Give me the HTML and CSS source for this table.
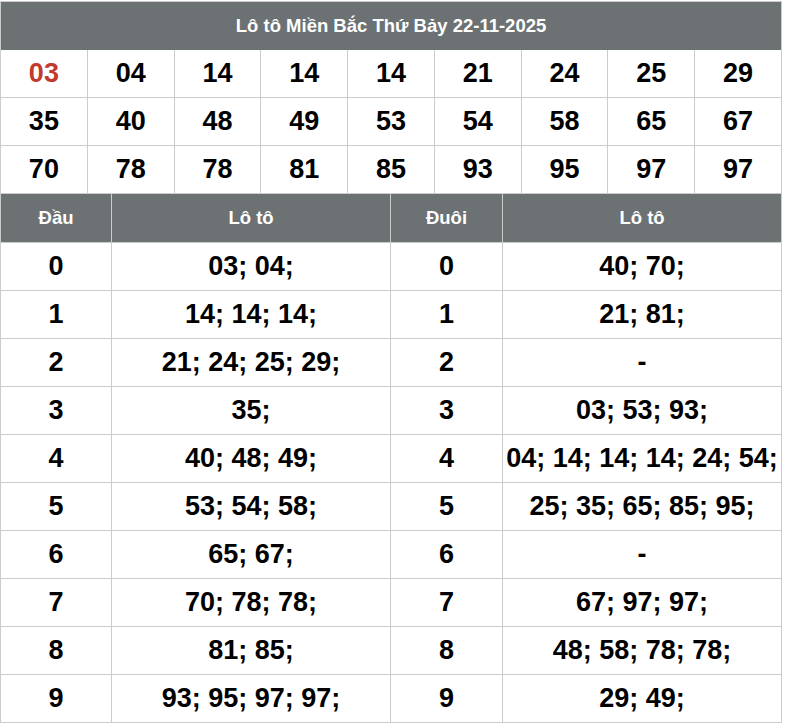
FILE: index.html
```html
<!DOCTYPE html>
<html lang="vi">
<head>
<meta charset="utf-8">
<title>Lô tô Miền Bắc</title>
<link rel="stylesheet" href="styles.css">
</head>
<body>
<div class="page">
  <div class="board">
    <div class="title">Lô tô Miền Bắc Thứ Bảy 22-11-2025</div>
    <div class="num hot">03</div>
    <div class="num">04</div>
    <div class="num">14</div>
    <div class="num">14</div>
    <div class="num">14</div>
    <div class="num">21</div>
    <div class="num">24</div>
    <div class="num">25</div>
    <div class="num">29</div>
    <div class="num">35</div>
    <div class="num">40</div>
    <div class="num">48</div>
    <div class="num">49</div>
    <div class="num">53</div>
    <div class="num">54</div>
    <div class="num">58</div>
    <div class="num">65</div>
    <div class="num">67</div>
    <div class="num">70</div>
    <div class="num">78</div>
    <div class="num">78</div>
    <div class="num">81</div>
    <div class="num">85</div>
    <div class="num">93</div>
    <div class="num">95</div>
    <div class="num">97</div>
    <div class="num">97</div>
  </div>
  <div class="split">
    <div class="head">Đầu</div>
    <div class="head">Lô tô</div>
    <div class="head">Đuôi</div>
    <div class="head">Lô tô</div>

    <div class="cell">0</div><div class="cell">03; 04;</div><div class="cell">0</div><div class="cell">40; 70;</div>
    <div class="cell">1</div><div class="cell">14; 14; 14;</div><div class="cell">1</div><div class="cell">21; 81;</div>
    <div class="cell">2</div><div class="cell">21; 24; 25; 29;</div><div class="cell">2</div><div class="cell">-</div>
    <div class="cell">3</div><div class="cell">35;</div><div class="cell">3</div><div class="cell">03; 53; 93;</div>
    <div class="cell">4</div><div class="cell">40; 48; 49;</div><div class="cell">4</div><div class="cell">04; 14; 14; 14; 24; 54;</div>
    <div class="cell">5</div><div class="cell">53; 54; 58;</div><div class="cell">5</div><div class="cell">25; 35; 65; 85; 95;</div>
    <div class="cell">6</div><div class="cell">65; 67;</div><div class="cell">6</div><div class="cell">-</div>
    <div class="cell">7</div><div class="cell">70; 78; 78;</div><div class="cell">7</div><div class="cell">67; 97; 97;</div>
    <div class="cell">8</div><div class="cell">81; 85;</div><div class="cell">8</div><div class="cell">48; 58; 78; 78;</div>
    <div class="cell">9</div><div class="cell">93; 95; 97; 97;</div><div class="cell">9</div><div class="cell">29; 49;</div>
  </div>
</div>
</body>
</html>
```

FILE: styles.css
```css
html, body {
  margin: 0;
  padding: 0;
  background: #ffffff;
}

body {
  font-family: "Liberation Sans", Arial, sans-serif;
  font-weight: bold;
  color: #000000;
}

.page {
  width: 782px;
  padding-top: 1px;
}

.board {
  display: grid;
  grid-template-columns: repeat(9, 1fr);
  grid-auto-rows: 47px;
  gap: 1px;
  padding: 1px 1px 0 1px;
  background: #cccccc;
}

.title {
  grid-column: 1 / -1;
  height: 48px;
  background: #6c7273;
  color: #ffffff;
  font-size: 18.5px;
  display: flex;
  align-items: center;
  justify-content: center;
}

.board .title {
  margin-bottom: 0;
}

.num {
  background: #ffffff;
  font-size: 27px;
  display: flex;
  align-items: center;
  justify-content: center;
}

.num.hot {
  color: #c23a2e;
}

.split {
  display: grid;
  grid-template-columns: 110px 278px 111px 1fr;
  grid-template-rows: 48px;
  grid-auto-rows: 47px;
  gap: 1px;
  padding: 1px;
  background: #cccccc;
}

.head {
  background: #6c7273;
  color: #ffffff;
  font-size: 18.5px;
  display: flex;
  align-items: center;
  justify-content: center;
}

.cell {
  background: #ffffff;
  font-size: 27px;
  white-space: nowrap;
  display: flex;
  align-items: center;
  justify-content: center;
}
```
